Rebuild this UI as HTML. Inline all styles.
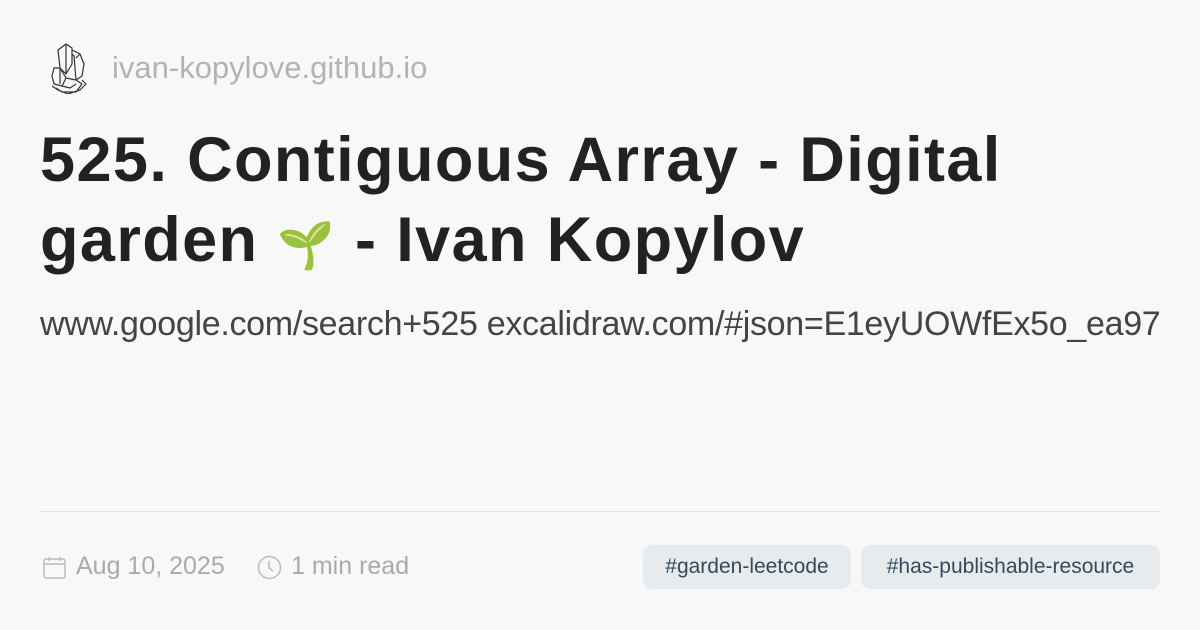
<!DOCTYPE html>
<html><head><style>
body{margin:0;width:1200px;height:630px;background:#f9f8f9;font-family:"Liberation Sans","Noto Sans CJK SC",sans-serif;position:relative;overflow:hidden}
.site{position:absolute;left:112px;top:50px;font-size:31px;color:#b3b3b3}
h1{position:absolute;left:40px;top:120px;margin:0;font-size:63px;line-height:80px;font-weight:bold;color:#222;width:1030px;letter-spacing:1.4px}
h1 .e{font-size:46px}
.sub{position:absolute;left:40px;top:305px;font-size:34px;color:#444;white-space:nowrap;letter-spacing:-0.3px}
.hr{position:absolute;left:40px;right:40px;top:511px;border-top:1px solid #e3e3e3}
.meta{position:absolute;top:552px;font-size:25px;color:#aaa}
.tag{position:absolute;top:545px;height:44px;line-height:44px;background:#e8ebee;border-radius:9px;color:#34495e;font-size:21px;text-align:center}
</style></head><body>
<svg style="position:absolute;left:46px;top:42px" width="44" height="52" viewBox="0 0 44 52" fill="none" stroke="#333" stroke-width="1.2" stroke-linejoin="round">
<path d="M12 8 L20 2 L26 6 L26 22 L20 32 L14 26 Z M20 2 L20 32 M26 8 L34 12 L38 22 L36 34 L30 38 L28 14 L26 12 M34 12 L30 16 M8 26 L14 26 L20 36 L16 44 L8 42 L6 34 Z M14 26 L14 42 M20 36 L30 38 L36 42 L30 50 L16 50 L10 46 M6 44 L12 48 L22 52 L34 48 L40 42 L36 38 M16 44 L24 46 L30 42"/>
</svg>
<div class="site">ivan-kopylove.github.io</div>
<h1>525. Contiguous Array - Digital garden <span class="e">🌱</span> - Ivan Kopylov</h1>
<div class="sub">www.google.com/search+525 excalidraw.com/#json=E1eyUOWfEx5o_ea97</div>
<div class="hr"></div>
<svg style="position:absolute;left:43px;top:556px" width="24" height="24" viewBox="0 0 24 24" fill="none" stroke="#bbb" stroke-width="1.5"><rect x="1" y="3" width="21" height="19" rx="2"/><path d="M1 8h21M6 1v4M17 1v4"/></svg>
<div class="meta" style="left:76px">Aug 10, 2025</div>
<svg style="position:absolute;left:257px;top:555px" width="25" height="25" viewBox="0 0 25 25" fill="none" stroke="#bbb" stroke-width="1.5"><circle cx="12.5" cy="12.5" r="11"/><path d="M12 6v7l4 3"/></svg>
<div class="meta" style="left:291px">1 min read</div>
<div class="tag" style="left:643px;width:208px">#garden-leetcode</div>
<div class="tag" style="left:861px;width:299px">#has-publishable-resource</div>
</body></html>
